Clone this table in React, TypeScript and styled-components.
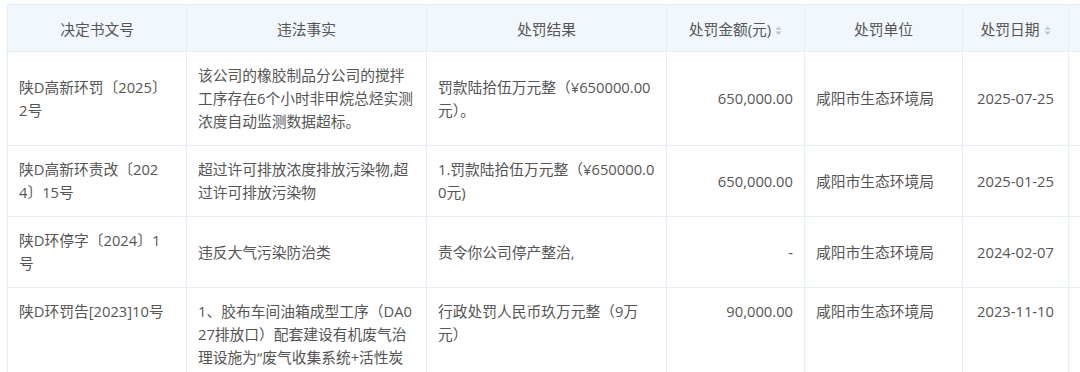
import React from 'react'
import styled, { createGlobalStyle } from 'styled-components'

type Row = {
    doc: string[]
    fact: string[]
    result: string[]
    amount: string
    unit: string
    date: string
    top?: boolean
}

const rows: Row[] = [
    {
        doc: ['陕D高新环罚〔2025〕', '2号'],
        fact: ['该公司的橡胶制品分公司的搅拌', '工序存在6个小时非甲烷总烃实测', '浓度自动监测数据超标。'],
        result: ['罚款陆拾伍万元整（¥650000.00', '元）。'],
        amount: '650,000.00',
        unit: '咸阳市生态环境局',
        date: '2025-07-25',
    },
    {
        doc: ['陕D高新环责改〔202', '4〕15号'],
        fact: ['超过许可排放浓度排放污染物,超', '过许可排放污染物'],
        result: ['1.罚款陆拾伍万元整（¥650000.0', '0元)'],
        amount: '650,000.00',
        unit: '咸阳市生态环境局',
        date: '2025-01-25',
    },
    {
        doc: ['陕D环停字〔2024〕1', '号'],
        fact: ['违反大气污染防治类'],
        result: ['责令你公司停产整治,'],
        amount: '-',
        unit: '咸阳市生态环境局',
        date: '2024-02-07',
    },
    {
        doc: ['陕D环罚告[2023]10号'],
        fact: ['1、胶布车间油箱成型工序（DA0', '27排放口）配套建设有机废气治', '理设施为“废气收集系统+活性炭'],
        result: ['行政处罚人民币玖万元整（9万', '元）'],
        amount: '90,000.00',
        unit: '咸阳市生态环境局',
        date: '2023-11-10',
        top: true,
    },
]

const Lines = ({ lines }: { lines: string[] }) => (
    <>
        {lines.map((l, i) => <Line key={i}>{l}</Line>)}
    </>
)

export default function App() {
    return (
        <>
            <GlobalStyle />
            <Page>
                <Table>
                    <colgroup>
                        <col style={{ width: 179 }} />
                        <col style={{ width: 240 }} />
                        <col style={{ width: 240 }} />
                        <col style={{ width: 138 }} />
                        <col style={{ width: 158 }} />
                        <col style={{ width: 106 }} />
                        <col style={{ width: 40 }} />
                    </colgroup>
                    <thead>
                        <tr>
                            <Th>决定书文号</Th>
                            <Th>违法事实</Th>
                            <Th>处罚结果</Th>
                            <Th>处罚金额(元)<SortIcon /></Th>
                            <Th>处罚单位</Th>
                            <Th>处罚日期<SortIcon /></Th>
                            <Th />
                        </tr>
                    </thead>
                    <tbody>
                        {rows.map((row, i) => (
                            <tr key={i}>
                                <Td $top={row.top}><Lines lines={row.doc} /></Td>
                                <Td $top={row.top}><Lines lines={row.fact} /></Td>
                                <Td $top={row.top}><Lines lines={row.result} /></Td>
                                <Td $top={row.top} $align="right">{row.amount}</Td>
                                <Td $top={row.top}>{row.unit}</Td>
                                <Td $top={row.top} $align="center">{row.date}</Td>
                                <Td />
                            </tr>
                        ))}
                    </tbody>
                </Table>
            </Page>
        </>
    )
}

function SortIcon() {
    return (
        <Sort viewBox="0 0 8 12">
            <path d="M4 1 L7.5 5 L0.5 5 Z" fill="#c0c4cc" />
            <path d="M4 11 L7.5 7 L0.5 7 Z" fill="#c0c4cc" />
        </Sort>
    )
}

const GlobalStyle = createGlobalStyle`
    html, body {
        margin: 0;
        padding: 0;
        background: #ffffff;
    }
    body {
        font-family: "Open Sans", "Noto Sans CJK SC", sans-serif;
    }
`

const Page = styled.div`
    width: 1080px;
    height: 372px;
    overflow: hidden;
    padding: 4px 0 0 7px;
    box-sizing: border-box;
`

const Table = styled.table`
    table-layout: fixed;
    border-collapse: collapse;
    width: 1101px;
    font-size: 14.75px;
    color: #555;
`

const Th = styled.th`
    height: 47px;
    box-sizing: border-box;
    background: #f1f7fd;
    border: 1px solid #e6eef6;
    font-weight: 400;
    color: #555;
    text-align: center;
    white-space: nowrap;
    padding: 0 8px;
`

const Td = styled.td<{ $align?: 'left' | 'right' | 'center'; $top?: boolean }>`
    border: 1px solid #e6eef6;
    padding: 12px 11px;
    line-height: 23px;
    text-align: ${p => p.$align || 'left'};
    vertical-align: ${p => (p.$top ? 'top' : 'middle')};
    white-space: nowrap;
    overflow: hidden;
    color: #555;
`

const Line = styled.div`
    white-space: nowrap;
`

const Sort = styled.svg`
    width: 7px;
    height: 11px;
    margin-left: 4px;
    vertical-align: -1px;
`
